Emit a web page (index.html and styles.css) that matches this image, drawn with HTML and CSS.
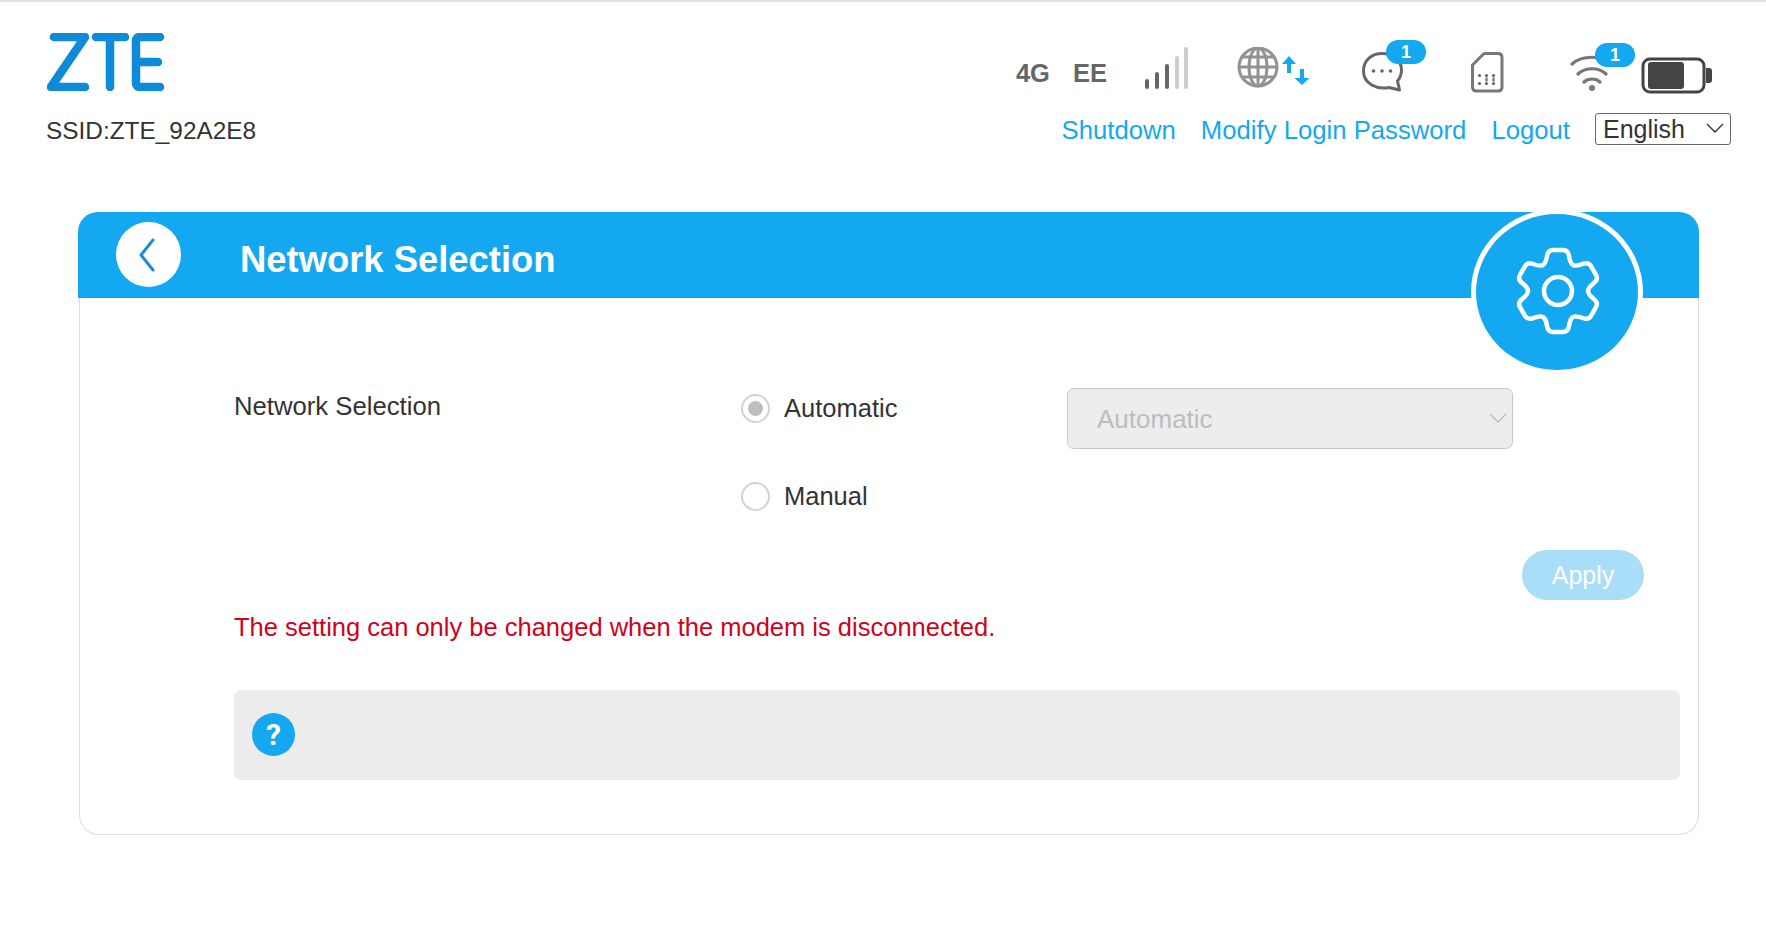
FILE: index.html
```html
<!DOCTYPE html>
<html lang="en">
<head>
<meta charset="utf-8">
<title>Network Selection</title>
<link rel="stylesheet" href="styles.css">
</head>
<body>
<header class="top">
  <div class="brand">
    <svg class="logo" viewBox="47 33 120 58" width="120" height="58" aria-label="ZTE logo">
      <g fill="none" stroke="#0d8ad8" stroke-width="8.5" stroke-linecap="round" stroke-linejoin="round">
        <path d="M54 37H85L51 87H85"/>
        <path d="M96 37H125M110 37V87"/>
        <path d="M160 37H140Q136 37 136 41V83Q136 87 140 87H160M136 62H158"/>
      </g>
    </svg>
    <div class="ssid">SSID:ZTE_92A2E8</div>
  </div>
  <div class="status">
    <div class="icons">
      <span class="net net-4g">4G</span>
      <span class="net net-ee">EE</span>
      <svg class="ic ic-signal" viewBox="1145 47 44 47" width="44" height="47" aria-label="signal">
        <g fill="none" stroke-width="4" stroke-linecap="round">
          <path stroke="#666" d="M1147 81V87M1157 74V87M1167 66V87"/>
          <path stroke="#ccc" d="M1177 58V87M1186 49V87"/>
        </g>
      </svg>
      <svg class="ic ic-globe" viewBox="1237 47 74 47" width="74" height="47" aria-label="connected">
        <g fill="none" stroke="#929292" stroke-width="3">
          <circle cx="1258" cy="67" r="19"/>
          <ellipse cx="1258" cy="67" rx="9" ry="19"/>
          <path d="M1258 48V86M1239 67H1277M1242 57H1274M1242 77H1274"/>
        </g>
        <path fill="#13a8ef" d="M1289 56l7 8h-5v9h-4v-9h-5zM1302 85l-7.500-7h5.500v-9h4v9h5.500z"/>
      </svg>
      <span class="ic-wrap ic-chat">
        <svg viewBox="1362 47 44 47" width="44" height="47" aria-label="messages">
          <path fill="none" stroke="#666" stroke-width="3" stroke-linejoin="round" d="M1389 87.500C1377 90 1363.500 84 1363.500 71C1363.500 60 1372 53.500 1382 53.500C1393 53.500 1401.500 60 1401.500 70C1401.500 74 1400 78 1397.500 81L1399.500 90Z"/>
          <g fill="#666"><circle cx="1373.500" cy="71" r="1.800"/><circle cx="1382" cy="71" r="1.800"/><circle cx="1390.500" cy="71" r="1.800"/></g>
        </svg>
        <b class="badge badge-chat">1</b>
      </span>
      <svg class="ic ic-sim" viewBox="1471 47 33 47" width="33" height="47" aria-label="SIM card">
        <path fill="none" stroke="#777" stroke-width="3" stroke-linejoin="round" d="M1484 53.500H1498Q1502 53.500 1502 57.500V87Q1502 91 1498 91H1476.500Q1472.500 91 1472.500 87V65Z"/>
        <g fill="#666"><circle cx="1479.500" cy="75.500" r="1.600"/><circle cx="1486.500" cy="75.500" r="1.600"/><circle cx="1493.500" cy="75.500" r="1.600"/><circle cx="1479.500" cy="83.500" r="1.600"/><circle cx="1486.500" cy="83.500" r="1.600"/><circle cx="1493.500" cy="83.500" r="1.600"/><path d="M1485.500 77.500h2v4h-2zM1492.500 77.500h2v4h-2z"/></g>
      </svg>
      <span class="ic-wrap ic-wifi">
        <svg viewBox="1570 47 44 47" width="44" height="47" aria-label="wifi">
          <g fill="none" stroke="#777" stroke-width="3.200" stroke-linecap="round">
            <path d="M1572 64C1582 55 1602 55 1612 64M1578 74C1585 67 1599 67 1606 74M1584 82C1588 78 1596 78 1600 82"/>
          </g>
          <circle cx="1592" cy="88" r="3" fill="#777"/>
        </svg>
        <b class="badge badge-wifi">1</b>
      </span>
      <svg class="ic ic-battery" viewBox="1641 47 72 47" width="72" height="47" aria-label="battery">
        <rect x="1643" y="59" width="61" height="33" rx="7" fill="none" stroke="#444" stroke-width="3"/>
        <rect x="1648" y="62" width="36" height="27" rx="3" fill="#444"/>
        <path fill="#444" d="M1706 68h3q3 0 3 3v9q0 3-3 3h-3z"/>
      </svg>
    </div>
    <nav class="links">
      <a class="link" href="#">Shutdown</a>
      <a class="link" href="#">Modify Login Password</a>
      <a class="link" href="#">Logout</a>
      <span class="lang">
        <span>English</span>
        <svg class="lang-caret" viewBox="0 0 18 10" width="18" height="10"><path d="M1 1l8 8 8-8" fill="none" stroke="#333" stroke-width="1.400"/></svg>
      </span>
    </nav>
  </div>
</header>

<main class="card">
  <div class="card-head">
    <a class="back" href="#" aria-label="Back">
      <svg viewBox="0 0 20 36" width="20" height="36"><path d="M16 3L4 18l12 15" fill="none" stroke="#1a8fd0" stroke-width="3" stroke-linecap="round" stroke-linejoin="round"/></svg>
    </a>
    <h1 class="title">Network Selection</h1>
  </div>
  <div class="gear">
    <svg viewBox="-51 -49 100 100" width="100" height="100">
      <defs><path id="tooth" d="M-15 -26C-12.400 -27.500 -11.800 -30 -11 -35C-10.400 -39 -8 -41 -5 -41H5C8 -41 10.400 -39 11 -35C11.800 -30 12.400 -27.500 15 -26"/></defs>
      <g fill="none" stroke="#fff" stroke-width="4.500">
        <use href="#tooth"/>
        <use href="#tooth" transform="rotate(60)"/>
        <use href="#tooth" transform="rotate(120)"/>
        <use href="#tooth" transform="rotate(180)"/>
        <use href="#tooth" transform="rotate(240)"/>
        <use href="#tooth" transform="rotate(300)"/>
        <circle r="14"/>
      </g>
    </svg>
  </div>
  <div class="card-body">
    <div class="form">
      <div class="label">Network Selection</div>
      <div class="options">
        <div class="opt"><span class="radio on"></span><span>Automatic</span></div>
        <div class="opt"><span class="radio"></span><span>Manual</span></div>
      </div>
      <div class="drop">
        <span>Automatic</span>
        <svg viewBox="0 0 18 10" width="18" height="10"><path d="M1 1l8 8 8-8" fill="none" stroke="#bbb" stroke-width="1.400"/></svg>
      </div>
    </div>
    <div class="actions"><button class="apply" type="button" disabled>Apply</button></div>
    <p class="warn">The setting can only be changed when the modem is disconnected.</p>
    <div class="help"><span class="help-ic">?</span></div>
  </div>
</main>
</body>
</html>
```
FILE: styles.css
```css
* { box-sizing: border-box; }
html, body { margin: 0; padding: 0; }
body {
  width: 1766px;
  height: 934px;
  overflow: hidden;
  background: #fff;
  border-top: 2px solid #e2e2e2;
  font-family: "Liberation Sans", Arial, sans-serif;
  font-size: 25px;
  color: #333;
}
.top {
  display: flex;
  justify-content: space-between;
  padding: 31px 35px 0 47px;
  height: 210px;
}
.logo { display: block; filter: blur(0.4px); }
.ssid { margin: 25px 0 0 -1px; font-size: 24.4px; line-height: 30px; }
.status { display: flex; flex-direction: column; align-items: flex-end; padding-top: 14px; }
.icons { display: flex; align-items: flex-start; height: 47px; margin-right: 18px; }
.ic, .ic-wrap svg { display: block; filter: blur(0.35px); }
.ic-wrap { position: relative; display: block; }
.net { font-weight: 700; font-size: 25.5px; color: #666; line-height: 52px; }
.net-ee { margin-left: 23px; }
.ic-signal { margin-left: 38px; }
.ic-globe { margin-left: 48px; }
.ic-chat { margin-left: 51px; }
.ic-sim { margin-left: 65px; }
.ic-wifi { margin-left: 66px; }
.ic-battery { margin-left: 27px; }
.badge {
  position: absolute;
  width: 40px;
  height: 24px;
  border-radius: 12px;
  background: #13a8ef;
  color: #fff;
  font-size: 18px;
  line-height: 24px;
  text-align: center;
}
.badge-chat { left: 24px; top: -7px; }
.badge-wifi { left: 25px; top: -4px; }
.links { display: flex; align-items: center; gap: 25px; height: 32px; margin-top: 19px; font-size: 25.7px; }
.link { color: #13a8ef; text-decoration: none; position: relative; top: 1px; }
.lang {
  display: flex;
  align-items: center;
  justify-content: space-between;
  width: 136px;
  height: 32px;
  padding: 0 6px 0 7px;
  border: 1px solid #666;
  border-radius: 3px;
  font-size: 25px;
}
.lang-caret { margin-bottom: 2px; }
.card {
  position: relative;
  width: 1620px;
  margin-left: 79px;
  height: 623px;
  border: 1px solid #ddd;
  border-top: 0;
  border-radius: 20px;
}
.card-head {
  display: flex;
  align-items: center;
  height: 86px;
  margin: 0 -1px 0 -2px;
  padding: 0 0 0 38px;
  background: #13a8ef;
  border-radius: 20px 20px 0 0;
}
.back {
  display: flex;
  align-items: center;
  justify-content: center;
  width: 65px;
  height: 65px;
  margin-top: -1px;
  padding-right: 3px;
  border-radius: 50%;
  background: #fff;
}
.title { margin: 11px 0 0 59px; font-size: 36.4px; font-weight: 700; color: #fff; line-height: 1; }
.gear {
  position: absolute;
  left: 1391px;
  top: -3px;
  width: 172px;
  height: 166px;
  display: flex;
  align-items: center;
  justify-content: center;
  border: 5px solid #fff;
  border-radius: 50%;
  background: #13a8ef;
}
.card-body { padding: 81px 18px 0 154px; }
.form { display: flex; align-items: flex-start; }
.label { width: 507px; font-size: 25.7px; line-height: 30px; padding-top: 12px; }
.options { width: 326px; font-size: 25.5px; }
.opt { display: flex; align-items: center; gap: 14px; height: 58px; margin-bottom: 30px; }
.radio {
  display: flex;
  align-items: center;
  justify-content: center;
  width: 29px;
  height: 29px;
  border: 2px solid #d2d2d2;
  border-radius: 50%;
}
.radio.on::before { content: ""; width: 15px; height: 15px; border-radius: 50%; background: #bfbfbf; }
.drop {
  display: flex;
  align-items: center;
  justify-content: space-between;
  width: 446px;
  height: 61px;
  margin-top: 9px;
  padding: 2px 5px 0 29px;
  border: 1px solid #c8c8c8;
  border-radius: 7px;
  background: #ededed;
  color: #bdbdbd;
  font-size: 26px;
}
.drop svg { margin-top: -3px; }
.actions { display: flex; justify-content: flex-end; padding-right: 36px; margin-top: -5px; }
.apply {
  width: 122px;
  height: 50px;
  border: 0;
  border-radius: 25px;
  background: #a9def9;
  color: #fff;
  font: inherit;
}
.warn { margin: 10px 0 0; font-size: 25.5px; line-height: 34px; color: #d0021b; }
.help {
  display: flex;
  align-items: center;
  height: 90px;
  margin-top: 46px;
  padding: 0 0 2px 18px;
  border-radius: 7px;
  background: #ececec;
}
.help-ic {
  width: 43px;
  height: 43px;
  border-radius: 50%;
  background: #13a8ef;
  color: #fff;
  font-family: "Roboto", sans-serif;
  font-weight: 700;
  font-size: 30px;
  line-height: 43px;
  text-align: center;
}
```
